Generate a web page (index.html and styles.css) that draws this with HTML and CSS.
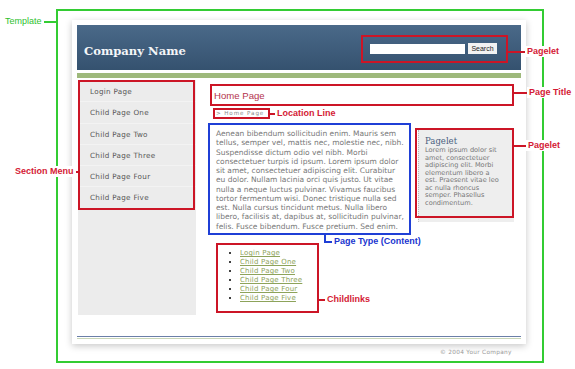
FILE: index.html
```html
<!DOCTYPE html>
<html lang="en">
<head>
    <meta charset="UTF-8">
    <meta name="viewport" content="width=device-width, initial-scale=1.0">
    <title>Template Anatomy</title>
    <link rel="stylesheet" href="styles.css">
</head>
<body>
    <div class="stage">

        <div class="sheet">
            <header class="masthead">
                <span class="brand">Company Name</span>
                <form class="search">
                    <input type="text" class="search-box">
                    <button type="button" class="search-btn">Search</button>
                </form>
            </header>
            <div class="rule"></div>

            <div class="columns">
                <nav class="menu">
                    <a href="#">Login Page</a>
                    <a href="#">Child Page One</a>
                    <a href="#">Child Page Two</a>
                    <a href="#">Child Page Three</a>
                    <a href="#">Child Page Four</a>
                    <a href="#">Child Page Five</a>
                </nav>

                <main class="main">
                    <h1 class="page-title">Home Page</h1>
                    <div class="crumb">&gt; Home Page</div>

                    <div class="row">
                        <div class="content">
                            Aenean bibendum sollicitudin enim. Mauris sem tellus, semper vel, mattis nec, molestie nec, nibh.
                            Suspendisse dictum odio vel nibh. Morbi consectetuer turpis id ipsum. Lorem ipsum dolor sit amet,
                            consectetuer adipiscing elit. Curabitur eu dolor. Nullam lacinia orci quis justo. Ut vitae nulla
                            a neque luctus pulvinar. Vivamus faucibus tortor fermentum wisi. Donec tristique nulla sed est.
                            Nulla cursus tincidunt metus. Nulla libero libero, facilisis at, dapibus at, sollicitudin pulvinar,
                            felis. Fusce bibendum. Fusce pretium. Sed enim.
                        </div>
                        <aside class="pagelet">
                            <h2>Pagelet</h2>
                            <p>Lorem ipsum dolor sit amet, consectetuer adipiscing elit. Morbi elementum libero a est. Praesent vitae leo ac nulla rhoncus semper. Phasellus condimentum.</p>
                        </aside>
                    </div>

                    <ul class="childlinks">
                        <li><a href="#">Login Page</a></li>
                        <li><a href="#">Child Page One</a></li>
                        <li><a href="#">Child Page Two</a></li>
                        <li><a href="#">Child Page Three</a></li>
                        <li><a href="#">Child Page Four</a></li>
                        <li><a href="#">Child Page Five</a></li>
                    </ul>
                </main>
            </div>

            <div class="baseline"></div>
        </div>
        <div class="copyright">&copy; 2004 Your Company</div>

        <!-- annotation layer -->
        <div class="note-box green" style="left:56px; top:9px; width:488px; height:354px;"></div>
        <div class="lead green" style="left:41px; top:21px; width:15px;"></div>
        <span class="label green-text" style="left:3px; top:16px;">Template</span>

        <div class="note-box red" style="left:361px; top:35px; width:147px; height:28px;"></div>
        <div class="lead red" style="left:508px; top:51px; width:18px;"></div>
        <span class="label red-text" style="left:525px; top:46px;">Pagelet</span>

        <div class="note-box red" style="left:210px; top:84px; width:304px; height:22px;"></div>
        <div class="lead red" style="left:514px; top:92px; width:14px;"></div>
        <span class="label red-text" style="left:527px; top:87px;">Page Title</span>

        <div class="note-box red" style="left:213px; top:108px; width:57px; height:11px;"></div>
        <div class="lead red" style="left:270px; top:113px; width:6px;"></div>
        <span class="label red-text" style="left:275px; top:108px;">Location Line</span>

        <div class="note-box red" style="left:78px; top:80px; width:117px; height:130px;"></div>
        <div class="lead red" style="left:72px; top:171px; width:6px;"></div>
        <span class="label red-text" style="left:13px; top:166px;">Section Menu</span>

        <div class="note-box blue" style="left:208px; top:123px; width:203px; height:112px;"></div>
        <div class="lead-v blue" style="left:324px; top:235px; height:7px;"></div>
        <div class="lead blue" style="left:324px; top:241px; width:9px;"></div>
        <span class="label blue-text" style="left:332px; top:236px;">Page Type (Content)</span>

        <div class="note-box red" style="left:415px; top:128px; width:99px; height:90px;"></div>
        <div class="lead red" style="left:514px; top:145px; width:14px;"></div>
        <span class="label red-text" style="left:526px; top:140px;">Pagelet</span>

        <div class="note-box red" style="left:216px; top:243px; width:103px; height:70px;"></div>
        <div class="lead red" style="left:319px; top:299px; width:8px;"></div>
        <span class="label red-text" style="left:325px; top:294px;">Childlinks</span>
    </div>
</body>
</html>
```

FILE: styles.css
```css
/* --- General --- */
body {
    margin: 0;
    background-color: #fff;
    font-family: 'DejaVu Sans', Verdana, sans-serif;
    color: #666;
}

.stage {
    position: relative;
    width: 575px;
    height: 369px;
    overflow: hidden;
}

/* --- Template sheet --- */
.sheet {
    margin: 20px 0 0 72px;
    width: 444px;
    padding: 5px 5px 5px 5px;
    background-color: #fff;
    box-shadow: 0 2px 7px rgba(0, 0, 0, 0.22);
}

.masthead {
    height: 45px;
    display: flex;
    align-items: center;
    justify-content: space-between;
    padding: 0 24px 0 7px;
    background: linear-gradient(to bottom, #4a6989, #35526f);
}

.brand {
    font-family: 'DejaVu Serif', Georgia, serif;
    font-weight: bold;
    font-size: 11.6px;
    color: #f4f6f8;
    padding-top: 7px;
}

.search {
    display: flex;
    align-items: center;
    gap: 3px;
    margin: 0;
    padding-top: 2px;
}

.search-box {
    width: 95px;
    height: 10px;
    padding: 0;
    border: 0;
    background-color: #fff;
}

.search-btn {
    width: 29px;
    height: 11px;
    padding: 0;
    border: 0;
    background-color: #f2f2f2;
    font-family: 'Liberation Sans', Arial, sans-serif;
    font-size: 7px;
    color: #222;
}

.rule {
    height: 5px;
    margin-top: 3px;
    background-color: #9eb97b;
}

/* --- Columns --- */
.columns {
    display: flex;
    gap: 14px;
    margin-top: 2px;
    height: 256px;
}

.menu {
    width: 118px;
    height: 234px;
    margin-left: 1px;
    padding-top: 1px;
    background-color: #ececec;
    display: flex;
    flex-direction: column;
}

.menu a {
    height: 21.3px;
    line-height: 21.3px;
    padding-left: 12px;
    font-size: 7.2px;
    letter-spacing: 0.3px;
    color: #555;
    text-decoration: none;
    border-bottom: 1px solid #f3f3f3;
    box-sizing: border-box;
}

.main {
    width: 304px;
}

.page-title {
    margin: 4px 0 0;
    height: 22px;
    line-height: 23px;
    padding-left: 4px;
    font-family: 'Liberation Sans', Arial, sans-serif;
    font-size: 9.6px;
    font-weight: normal;
    color: #b4334d;
    border-bottom: 1px dotted #ccc;
    box-sizing: border-box;
}

.crumb {
    margin: 2px 0 0 6px;
    height: 11px;
    line-height: 11px;
    font-size: 5.6px;
    letter-spacing: 0.9px;
    color: #888;
}

.row {
    display: flex;
    gap: 10px;
    margin-top: 4px;
}

.content {
    width: 188px;
    margin-right: 4px;
    padding: 6px 0 0 6px;
    height: 106px;
    font-size: 7.5px;
    line-height: 9.25px;
    color: #777;
}

.pagelet {
    margin-top: 7px;
    width: 78px;
    height: 86px;
    padding: 6px 11px 0 6px;
    background-color: #eee;
    border-left: 1px dotted #bbb;
}

.pagelet h2 {
    margin: 0;
    font-family: 'DejaVu Serif', Georgia, serif;
    font-weight: normal;
    font-size: 8.5px;
    line-height: 11px;
    color: #4a5f7e;
}

.pagelet p {
    margin: 0;
    font-size: 6.6px;
    line-height: 7.5px;
    color: #777;
}

.childlinks {
    margin: 14px 0 0 6px;
    padding-left: 24px;
    font-size: 7px;
    line-height: 9px;
}

.childlinks li {
    color: #000;
}

.childlinks a {
    color: #8da35a;
    letter-spacing: 0.2px;
}

.baseline {
    height: 1px;
    border-top: 1px solid #6b7fa8;
    border-bottom: 1px solid #c8d6b8;
}

.copyright {
    margin: 5px 0 0 440px;
    font-size: 5.8px;
    letter-spacing: 0.3px;
    color: #999;
}

/* --- Annotations --- */
.note-box {
    position: absolute;
    border: 2px solid;
    box-sizing: border-box;
}

.lead {
    position: absolute;
    height: 2px;
}

.lead-v {
    position: absolute;
    width: 2px;
}

.note-box.red { border-color: #cc1526; }
.note-box.green { border-color: #33cc33; }
.note-box.blue { border-color: #1f3fd6; }

.lead.red, .lead-v.red { background-color: #cc1526; }
.lead.green { background-color: #33cc33; }
.lead.blue, .lead-v.blue { background-color: #1f3fd6; }

.label {
    position: absolute;
    padding: 0 2px;
    background-color: #fff;
    font-family: 'Liberation Sans', Arial, sans-serif;
    font-size: 9px;
    line-height: 11px;
    white-space: nowrap;
}

.red-text { color: #d41a35; font-weight: bold; }
.green-text { color: #2fbf2f; }
.blue-text { color: #2035d0; font-weight: bold; }
```
